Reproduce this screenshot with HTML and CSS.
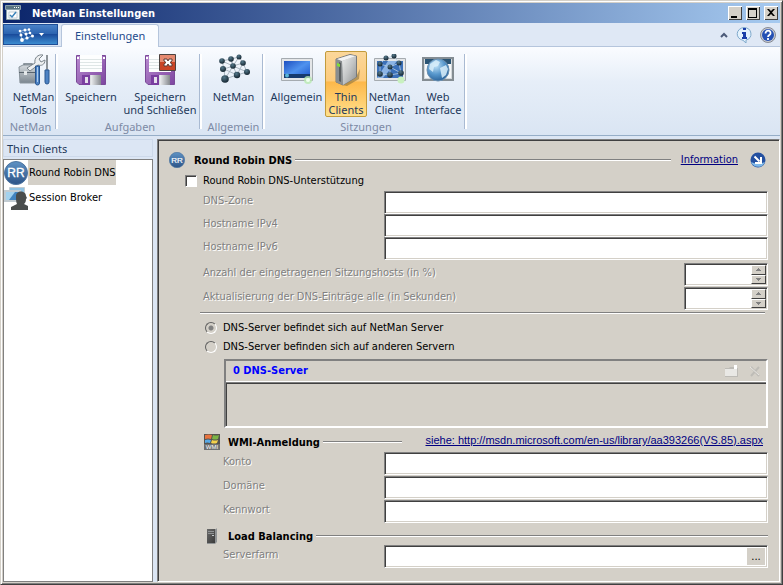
FILE: index.html
```html
<!DOCTYPE html>
<html lang="de">
<head>
<meta charset="utf-8">
<title>NetMan Einstellungen</title>
<link rel="stylesheet" href="styles.css">
</head>
<body>
<svg class="defs" aria-hidden="true">
  <defs>
    <linearGradient id="gBlue" x1="0" y1="0" x2="0" y2="1"><stop offset="0" stop-color="#5f92c4"/><stop offset="1" stop-color="#2c5488"/></linearGradient>
    <linearGradient id="gScreen" x1="0" y1="0" x2="1" y2="1"><stop offset="0" stop-color="#1d4fc0"/><stop offset=".5" stop-color="#4f92ee"/><stop offset="1" stop-color="#1c56cc"/></linearGradient>
    <linearGradient id="gPurple" x1="0" y1="0" x2="1" y2="1"><stop offset="0" stop-color="#b98bd0"/><stop offset="1" stop-color="#7d45a0"/></linearGradient>
    <linearGradient id="gMetal" x1="0" y1="0" x2="1" y2="0"><stop offset="0" stop-color="#8b9094"/><stop offset=".5" stop-color="#e6e8ea"/><stop offset="1" stop-color="#85898d"/></linearGradient>
    <linearGradient id="gCase" x1="0" y1="0" x2="1" y2="1"><stop offset="0" stop-color="#eceded"/><stop offset=".5" stop-color="#c3c5c6"/><stop offset="1" stop-color="#8d9091"/></linearGradient>
    <linearGradient id="gBox" x1="0" y1="0" x2="0" y2="1"><stop offset="0" stop-color="#d5dade"/><stop offset="1" stop-color="#7b868f"/></linearGradient>
    <radialGradient id="gNode" cx=".4" cy=".3" r=".8"><stop offset="0" stop-color="#54788a"/><stop offset="1" stop-color="#0c1a24"/></radialGradient>
    <radialGradient id="gGlobe" cx=".4" cy=".3" r=".8"><stop offset="0" stop-color="#c4e4f8"/><stop offset=".5" stop-color="#5797cc"/><stop offset="1" stop-color="#20568e"/></radialGradient>
    <linearGradient id="gDark" x1="0" y1="0" x2="1" y2="1"><stop offset="0" stop-color="#6b6b6b"/><stop offset="1" stop-color="#3a3a3a"/></linearGradient>
    <symbol id="floppy" viewBox="0 0 32 32">
      <path d="M1.500 1.500h29v29H4l-2.500-2.500z" fill="url(#gPurple)" stroke="#7a4a98"/>
      <path d="M5 1h22v17H5z" fill="#fdfefe"/>
      <path d="M5 5.500h22M5 8.500h22M5 11.500h22M5 14.500h22" stroke="#dfe6e6"/>
      <path d="M7 21h19v10H7z" fill="url(#gMetal)"/>
      <path d="M7 21h8v10H7z" fill="#7a3fa0"/>
      <path d="M10 23h3v6h-3z" fill="#e6e0ec"/>
      <path d="M2 3h2v2H2zM28 3h2v2h-2z" fill="#fff"/>
    </symbol>
    <symbol id="network" viewBox="0 0 32 32">
      <path d="M4 7l9-2 8-2 4 6-10 3-9 3-2-8 11 5-2-7 2 7 6-9M25 9l4 9-10 3-12 4-1-10 13 6-4-9 14 6M25 9l-6 12M7 25l8-13" fill="none" stroke="#9aa8b4" stroke-width=".8"/>
      <g fill="url(#gNode)"><circle cx="4" cy="7" r="2.800"/><circle cx="13" cy="5" r="2.800"/><circle cx="21" cy="3" r="2.500"/><circle cx="25" cy="9" r="2.800"/><circle cx="5" cy="15" r="3"/><circle cx="15" cy="12" r="2.800"/><circle cx="29" cy="18" r="3"/><circle cx="19" cy="21" r="3.200"/><circle cx="7" cy="25" r="3.800"/></g>
    </symbol>
    <symbol id="rr" viewBox="0 0 24 24">
      <circle cx="12" cy="12" r="11.500" fill="url(#gBlue)" stroke="#4c74a0"/>
      <text class="rr-text" x="12" y="16" text-anchor="middle">RR</text>
    </symbol>
  </defs>
</svg>

<div class="window">
  <header class="titlebar">
    <svg class="title-icon" viewBox="0 0 16 16" aria-hidden="true"><path d="M.5.500h15v4h-15z" fill="#5b7582" stroke="#8ba0aa"/><path d="M9 2h1v1H9zM11 2h1v1h-1zM13 2h1v1h-1z" fill="#fff"/><path d="M1.500 4.500h13v10h-13z" fill="#f4f7f8" stroke="#8ba0aa"/><path d="M4 7h8v6H4z" fill="#fff" stroke="#c2cfd6"/><path d="M5 10l2 2 4-5" fill="none" stroke="#3a82b8" stroke-width="1.500"/></svg>
    <h1>NetMan Einstellungen</h1>
    <div class="caption-buttons">
      <button type="button" aria-label="Minimieren"><svg viewBox="0 0 12 10"><path d="M2 8h6v2H2z"/></svg></button>
      <button type="button" aria-label="Maximieren"><svg viewBox="0 0 12 10"><path d="M1 0h9v10H1zM2 2v7h7V2z" fill-rule="evenodd"/></svg></button>
      <button type="button" aria-label="Schließen"><svg viewBox="0 0 12 10"><path d="M2 1h2l2 2 2-2h2L7 4.500 10 8H8L6 6 4 8H2l3-3.500z"/></svg></button>
    </div>
  </header>

  <nav class="tabs">
    <button type="button" class="app-button" aria-label="NetMan">
      <svg class="app-icon" viewBox="0 0 16 14" aria-hidden="true"><path d="M2 3l5-1 4 0 1 3 2 3-5 2-5 2-1-5z M2 3l6 3 4-1M8 6l1 4" fill="none" stroke="#a9c3e2" stroke-width=".7"/><g fill="#fff"><circle cx="2" cy="3" r="1.300"/><circle cx="7" cy="2" r="1.500"/><circle cx="11" cy="1.500" r="1.300"/><circle cx="3" cy="7" r="1.500"/><circle cx="8" cy="6" r="1.500"/><circle cx="12" cy="5" r="1.300"/><circle cx="14.500" cy="8" r="1.500"/><circle cx="9" cy="10" r="1.600"/><circle cx="4" cy="12" r="1.900"/></g></svg>
      <svg class="app-arrow" viewBox="0 0 5 3" aria-hidden="true"><path d="M0 0h5L2.500 3z" fill="#fff"/></svg>
    </button>
    <button type="button" class="tab">Einstellungen</button>
    <div class="tab-tools">
      <button type="button" aria-label="Menüband minimieren"><svg class="chevron" viewBox="0 0 8 6"><path d="M1 5l3-3 3 3" fill="none" stroke="#4b5a78" stroke-width="2"/></svg></button>
      <button type="button" aria-label="Info"><svg class="tool" viewBox="0 0 16 16"><path d="M8 .500a7.500 6.500 0 0 1 2 12.600V16l-3-2.700A7.500 6.500 0 0 1 8 .5z" fill="#e4f2fc" stroke="#7fa9cc"/><path d="M7 1h3v2H7zM6 5h4v5h1v2H6v-2h1V7H6z" fill="#1a3fa8"/></svg></button>
      <button type="button" aria-label="Hilfe"><svg class="tool" viewBox="0 0 16 16"><circle cx="8" cy="8" r="7.500" fill="#c9ccd4" stroke="#868a94"/><circle cx="8" cy="8" r="6" fill="#2450b4"/><path d="M5.500 6.500c0-4 5.500-3.500 5 0C10.200 8 8 8 8 10M8 11v2" fill="none" stroke="#fff" stroke-width="1.800"/></svg></button>
    </div>
  </nav>

  <section class="ribbon">
    <div class="group">
      <div class="group-buttons">
        <button type="button" class="big w-tools">
          <svg viewBox="0 0 32 32" aria-hidden="true"><path d="M6 13v-3h8v3" fill="none" stroke="#69757e" stroke-width="1.500"/><path d="M1 13l4-2h15v18H2z" fill="url(#gBox)" stroke="#8a949c"/><path d="M1 18.500h18" stroke="#59646d"/><path d="M6 17h3v4H6z" fill="#e4e8ea"/><path d="M9 14l8-5c-1-5 3-9 8-8l-4 4 2 3 4-2c0 5-4 6-7 5l-8 6z" fill="#eef0f1" stroke="#7b858c"/><path d="M28 1h2v16h-2z" fill="#8d9499"/><path d="M27 16h4v12q0 2-2 2t-2-2zM17.500 12h4v17q0 2-2 2t-2-2z" fill="#4c82c4" stroke="#285690"/><path d="M19.500 13v15" stroke="#a9cbed"/></svg>
          <span>NetMan Tools</span></button>
      </div>
      <h2>NetMan</h2>
    </div>
    <div class="group">
      <div class="group-buttons">
        <button type="button" class="big w-save"><svg aria-hidden="true"><use href="#floppy"/></svg><span>Speichern</span></button>
        <button type="button" class="big w-close">
          <svg viewBox="0 0 32 32" aria-hidden="true"><use href="#floppy" width="32" height="32"/><path d="M15.500.5h16v16h-16z" fill="#e58a70" stroke="#4c4340"/><path d="M16 8h15v8H16z" fill="#c94426"/><path d="M20 5h3l1 2 1-2h3v2l-2 1.500L28 10v2h-3l-1-2-1 2h-3v-2l2-1.500L20 7z" fill="#fff" stroke="#5d3a34"/></svg>
          <span>Speichern<br>und Schließen</span></button>
      </div>
      <h2>Aufgaben</h2>
    </div>
    <div class="group">
      <div class="group-buttons">
        <button type="button" class="big w-net"><svg aria-hidden="true"><use href="#network"/></svg><span>NetMan</span></button>
      </div>
      <h2>Allgemein</h2>
    </div>
    <div class="group">
      <div class="group-buttons">
        <button type="button" class="big w-general">
          <svg viewBox="0 0 32 32" aria-hidden="true"><path d="M.5 4.500h31v22H.5z" fill="#e4e6e8" stroke="#a5abb0"/><path d="M3 7h26v17H3z" fill="url(#gScreen)"/><path d="M3 20h26v4H3z" fill="#173b6e"/><circle cx="6" cy="21.500" r="2" fill="#58b4d8"/><circle cx="27" cy="26" r="4" fill="#b9eab0" opacity=".8"/><circle cx="27" cy="26" r="2" fill="#effff0"/></svg>
          <span>Allgemein</span></button>
        <button type="button" class="big w-thin active" aria-pressed="true">
          <svg viewBox="0 0 32 32" aria-hidden="true"><path d="M12 31l14-8 4-8-1 10-12 7z" fill="#8b713c" opacity=".6"/><path d="M6 5L20 .500l6.500 1.500v21L13 31l-7-3z" fill="#a8abad" stroke="#77797b"/><path d="M12 7l14-5v21l-13 8z" fill="url(#gCase)"/><path d="M6 5l6 2 1 24-7-3z" fill="#8a8e90"/><path d="M9 8l2 1v19l-2-1z" fill="#5a5e60"/><path d="M7 9l3 1v3l-3-1z" fill="#81de35"/><path d="M7 5L20 1l6 1-14 5z" fill="#f2f3f3"/></svg>
          <span>Thin<br>Clients</span></button>
        <button type="button" class="big w-client">
          <svg viewBox="0 0 32 32" aria-hidden="true"><path d="M.5 4.500h31v22H.5z" fill="#e4e6e8" stroke="#a5abb0"/><path d="M3 7h26v17H3z" fill="#3b70b8"/><path d="M3 24L14 7h9L9 24z" fill="#8cb4e4"/><path d="M6 10l6-6 8-2 5 7-9 4zM6 10v10l10 1 11-2-2-10M16 13v8M16 13l11 6" fill="none" stroke="#b8cfe2" stroke-width=".8"/><g fill="url(#gNode)"><circle cx="12" cy="4" r="2.500"/><circle cx="20" cy="2" r="2.500"/><circle cx="6" cy="10" r="2.500"/><circle cx="16" cy="13" r="2.500"/><circle cx="25" cy="9" r="2.500"/><circle cx="6" cy="20" r="2.800"/><circle cx="16" cy="21" r="2.800"/><circle cx="27" cy="19" r="2.800"/></g><circle cx="27" cy="26" r="3.500" fill="#c9f1c0"/></svg>
          <span>NetMan<br>Client</span></button>
        <button type="button" class="big w-web">
          <svg viewBox="0 0 32 32" aria-hidden="true"><path d="M1 4h30v22H1z" fill="#d4d9dc" stroke="#848d93" stroke-width="2"/><path d="M3 5h26v5H3z" fill="#2a5474"/><path d="M3 10h26v14H3z" fill="#f6f8f9"/><circle cx="16" cy="16" r="11" fill="url(#gGlobe)" stroke="#6c90b0"/><path d="M8 10l6-4 4 2-2 4-4 1-1 5-4-3zM18 14l6-3 2 4-2 6-4 3-1-5z" fill="#d9eefa" opacity=".85"/></svg>
          <span>Web<br>Interface</span></button>
      </div>
      <h2>Sitzungen</h2>
    </div>
  </section>

  <div class="body">
    <aside class="sidebar">
      <h2>Thin Clients</h2>
      <ul>
        <li><a href="#rrdns" class="item selected"><svg aria-hidden="true"><use href="#rr"/></svg><span>Round Robin DNS</span></a></li>
        <li><a href="#broker" class="item"><svg viewBox="0 0 24 24" aria-hidden="true"><path d="M5.500 1.500h15v11h-15z" fill="#8fc3e4" stroke="#c2ccd2"/><path d="M1 5h15v10H1z" fill="#4385c0" stroke="#c2ccd2" stroke-width="2"/><path d="M2 6h9l-6 8H2z" fill="#a3d2ee"/><path d="M12 10c0-6 10-6 10 0l1 2-1 1c0 3-1 4-2 5l4 2v4H7v-3l6-3c-1-2-1-4-1-8z" fill="#4a4d4c"/></svg><span>Session Broker</span></a></li>
      </ul>
    </aside>

    <main class="panel">
      <form>
        <div class="head" id="rrdns">
          <svg class="icon16" aria-hidden="true"><use href="#rr"/></svg>
          <h3>Round Robin DNS</h3><span class="rule"></span>
          <a class="info" href="#info">Information</a>
          <svg class="icon16 go" viewBox="0 0 16 16" aria-hidden="true"><circle cx="8" cy="8" r="7.500" fill="#2450a0"/><path d="M1 10a7.500 7.500 0 0 0 14 0q-7 3-14 0z" fill="#7fb8e8"/><path d="M4.500 4.500l5 5M11 5v6H5" fill="none" stroke="#fff" stroke-width="2"/></svg>
        </div>
        <div class="check-row"><input type="checkbox" id="rr-on"><label for="rr-on">Round Robin DNS-Unterstützung</label></div>

        <div class="fields">
          <label for="zone">DNS-Zone</label><input type="text" id="zone" disabled>
          <label for="v4">Hostname IPv4</label><input type="text" id="v4" disabled>
          <label for="v6">Hostname IPv6</label><input type="text" id="v6" disabled>
        </div>
        <div class="numbers">
          <label for="hosts">Anzahl der eingetragenen Sitzungshosts (in %)</label>
          <div class="spin"><input type="text" id="hosts" disabled><span class="steps"><button type="button" disabled aria-label="Mehr"><svg viewBox="0 0 5 3"><path d="M2 0h1v1h1v1h1v1H0V2h1V1h1z"/></svg></button><button type="button" disabled aria-label="Weniger"><svg viewBox="0 0 5 3"><path d="M0 0h5v1H4v1H3v1H2V2H1V1H0z"/></svg></button></span></div>
          <label for="refresh">Aktualisierung der DNS-Einträge alle (in Sekunden)</label>
          <div class="spin"><input type="text" id="refresh" disabled><span class="steps"><button type="button" disabled aria-label="Mehr"><svg viewBox="0 0 5 3"><path d="M2 0h1v1h1v1h1v1H0V2h1V1h1z"/></svg></button><button type="button" disabled aria-label="Weniger"><svg viewBox="0 0 5 3"><path d="M0 0h5v1H4v1H3v1H2V2H1V1H0z"/></svg></button></span></div>
        </div>
        <hr>
        <div class="radio-row"><input type="radio" name="loc" id="loc1" checked><label for="loc1">DNS-Server befindet sich auf NetMan Server</label></div>
        <div class="radio-row"><input type="radio" name="loc" id="loc2"><label for="loc2">DNS-Server befinden sich auf anderen Servern</label></div>

        <section class="servers">
          <header>
            <h4>0 DNS-Server</h4>
            <button type="button" disabled aria-label="Neu"><svg viewBox="0 0 13 12"><path d="M0 3h4l1-1h4v1h4v9H0z" fill="#bdbbb6"/><path d="M0 4h12v7H0z" fill="#e9e8e5"/><path d="M9 0h3v4H9z" fill="#fff"/></svg></button>
            <button type="button" disabled aria-label="Löschen"><svg viewBox="0 0 13 12"><path d="M2 2l8 9M10 2l-8 9" stroke="#bebcb7" stroke-width="2"/><path d="M1 2l9 8" stroke="#e9e7e3"/></svg></button>
          </header>
          <div class="server-list"></div>
        </section>

        <div class="head sub wmi">
          <svg class="icon16" viewBox="0 0 16 16" aria-hidden="true"><path d="M0 0h16v16H0z" fill="#56534f"/><path d="M1 1q4-1 7 0L7 5Q4 4 1 5z" fill="#e8743f"/><path d="M9 1q3 1 6 0l-1 4q-3 1-6 0z" fill="#7cb545"/><path d="M1 6q3-1 6 0L6 9Q3 8 1 9z" fill="#58a9e6"/><path d="M8 6q3 1 6 0l-1 3q-3 1-6 0z" fill="#f4d24c"/><path d="M0 10h16v6H0z" fill="#6d6f71"/><text class="wmi-text" x="8" y="15" text-anchor="middle">WMI</text></svg>
          <h3>WMI-Anmeldung</h3><span class="rule"></span>
          <a href="http://msdn.microsoft.com/en-us/library/aa393266(VS.85).aspx">siehe: http://msdn.microsoft.com/en-us/library/aa393266(VS.85).aspx</a>
        </div>
        <div class="fields login">
          <label for="account">Konto</label><input type="text" id="account" disabled>
          <label for="domain">Domäne</label><input type="text" id="domain" disabled>
          <label for="pass">Kennwort</label><input type="password" id="pass" disabled>
        </div>
        <div class="head sub load">
          <svg class="icon16" viewBox="0 0 16 16" aria-hidden="true"><path d="M3 1h9l1-1v14l-2 2H3z" fill="#909395"/><path d="M3 1h8v14H3z" fill="url(#gDark)"/><path d="M4 3.500h6M4 5.500h6" stroke="#8f9294"/><path d="M8 7h2v1H8z" fill="#c6cacc"/></svg>
          <h3>Load Balancing</h3><span class="rule"></span>
        </div>
        <div class="fields login">
          <label for="farm">Serverfarm</label>
          <div class="browse"><input type="text" id="farm" disabled><button type="button">...</button></div>
        </div>
      </form>
    </main>
  </div>
</div>
</body>
</html>
```
FILE: styles.css
```css
* { box-sizing: border-box; }
html, body { height: 100%; }
body {
  margin: 0;
  font: 11px/14px "DejaVu Sans Condensed", "DejaVu Sans", sans-serif;
  color: #000;
  background: #d4d0c8;
}
h1, h2, h3, h4, ul, hr { margin: 0; padding: 0; }
h1, h3, h4 { font-size: 11px; font-weight: bold; }
ul { list-style: none; }
button, input { margin: 0; padding: 0; border: 0; font: inherit; border-radius: 0; }
svg { display: block; }
.defs { position: absolute; width: 0; height: 0; }

.window {
  min-height: 100vh;
  display: flex;
  flex-direction: column;
  padding: 2px;
  border: 1px solid #d4d0c8;
  border-right-color: #404040;
  border-bottom-color: #404040;
  box-shadow: inset 1px 1px #fff, inset -1px -1px #808080;
  background: #d4d0c8;
}

.titlebar {
  display: flex;
  align-items: center;
  height: 20px;
  padding: 0 2px;
  color: #fff;
  background: linear-gradient(to right, #0a246a, #a6caf0);
}
.title-icon { width: 16px; height: 16px; }
.titlebar h1 { flex: 1; margin-left: 11px; padding-top: 1px; }
.caption-buttons { display: flex; gap: 4px; }
.caption-buttons button {
  width: 14px;
  height: 14px;
  padding: 1px;
  background: #d4d0c8;
  box-shadow: inset 1px 1px #fff, inset -1px -1px #404040;
}
.caption-buttons svg { width: 12px; height: 10px; }

.tabs {
  display: flex;
  align-items: stretch;
  height: 24px;
  background: #dfe8f5;
  border-bottom: 1px solid #b5c5dc;
}
.app-button {
  display: flex;
  align-items: center;
  justify-content: center;
  gap: 5px;
  width: 55px;
  margin: 1px 0;
  border: 1px solid #1f4e96;
  background: linear-gradient(#4a82c8, #2c64b0 45%, #1a4c9c 50%, #3c8cd0);
}
.app-icon { width: 16px; height: 14px; }
.app-arrow { width: 5px; height: 3px; }
.tab {
  position: relative;
  margin: 1px 0 -1px 3px;
  padding: 0 13px;
  border: 1px solid #b5c5dc;
  border-bottom: 0;
  border-radius: 3px 3px 0 0;
  background: #fafcff;
  color: #1e4a8c;
  font: 11px/22px "Noto Sans", sans-serif;
}
.tab-tools { display: flex; flex: 1; justify-content: flex-end; align-items: center; padding-right: 4px; }
.tab-tools button { background: none; margin-left: 8px; }
.chevron { width: 8px; height: 6px; }
.tool { width: 16px; height: 16px; }

.ribbon {
  display: flex;
  height: 89px;
  padding-top: 4px;
  background: linear-gradient(#fafcff, #e6eef8 40%, #dae5f3);
  border-bottom: 1px solid #96aec8;
}
.group { display: flex; flex-direction: column; padding: 0 3px; position: relative; }
.group::after {
  content: "";
  position: absolute;
  right: 0; top: 3px; bottom: 6px;
  width: 2px;
  border-left: 1px solid #a9bad2;
  background: #fff;
}
.group-buttons { display: flex; flex: 1; }
.group h2 {
  color: #7d8aa5;
  font: 11px/16px "Noto Sans", sans-serif;
  text-align: center;
}
.big {
  display: flex;
  flex-direction: column;
  align-items: center;
  height: 66px;
  padding-top: 3px;
  background: none;
  color: #1e395b;
  font: 11px/13px "Noto Sans", sans-serif;
  white-space: nowrap;
}
.big svg { width: 32px; height: 32px; margin-bottom: 4px; }
.big.active {
  border: 1px solid #c29b3c;
  border-radius: 2px;
  padding-top: 2px;
  background: linear-gradient(#fbd79a, #fdcb7c 45%, #fdb84a 47%, #ffe08c);
}
.w-tools { width: 49px; white-space: normal; padding-left: 6px; }
.w-save { width: 60px; }
.w-close { width: 78px; }
.w-net { width: 57px; }
.w-general { width: 57px; }
.w-thin { width: 42px; }
.w-client { width: 45px; }
.w-web { width: 52px; }

.body {
  flex: 1;
  display: flex;
  gap: 4px;
  padding-top: 3px;
  background: #dce6f4;
}
.sidebar { width: 150px; display: flex; flex-direction: column; }
.sidebar h2 {
  height: 18px;
  margin-bottom: 2px;
  padding-left: 3px;
  border: 1px solid #cdd9ea;
  color: #1e395b;
  font: 11px/18px "Noto Sans", sans-serif;
}
.sidebar ul { flex: 1; background: #fff; border: 1px solid #808080; }
.item { display: flex; align-items: center; height: 25px; color: #000; text-decoration: none; }
.item svg { width: 24px; height: 24px; }
.item span { padding: 1px 0 0 1px; line-height: 24px; }
.item.selected span { background: #d4d0c8; }
.rr-text { font: 12px "Liberation Sans", sans-serif; fill: #fff; stroke: #fff; stroke-width: .3px; }
.wmi-text { font: 6px "Liberation Sans", sans-serif; fill: #fff; }

.panel {
  flex: 1;
  min-width: 0;
  padding: 11px;
  background: #d4d0c8;
  border: 1px solid;
  border-color: #808080 #fff #fff #808080;
  box-shadow: inset 1px 1px #404040;
}
.head { display: flex; align-items: center; height: 18px; }
.head h3 { margin-left: 9px; padding-top: 1px; }
.head a { color: #000080; }
.rule { flex: 1; height: 2px; margin-left: 3px; background: #808080; border-bottom: 1px solid #fff; }
.icon16 { width: 16px; height: 16px; }
.info { margin-left: 10px; }
.go { margin: 0 2px 0 12px; }

.check-row { display: flex; align-items: center; height: 21px; margin-top: 1px; padding-left: 16px; }
.check-row label { margin-left: 6px; padding-top: 1px; }
input[type="checkbox"] {
  appearance: none;
  width: 12px;
  height: 12px;
  background: #fff;
  border: 1px solid;
  border-color: #808080 #fff #fff #808080;
  box-shadow: inset 1px 1px #404040;
}

.fields, .numbers { display: grid; grid-auto-rows: 23px; align-items: start; padding-left: 34px; color: #808080; }
.fields { grid-template-columns: 181px 1fr; }
.fields label, .numbers label { line-height: 20px; text-shadow: 1px 1px #fff; }
.fields > input, .browse, .spin {
  width: 100%;
  height: 23px;
  background: #fff;
  border: 1px solid;
  border-color: #808080 #fff #fff #808080;
  box-shadow: inset 1px 1px #404040, inset -1px -1px #d4d0c8;
}
.browse, .spin { display: flex; padding: 1px; }
.browse input, .spin input { flex: 1; min-width: 0; background: none; }
.browse button { width: 18px; margin: 1px; background: #d4d0c8; }
.numbers { grid-template-columns: 1fr 84px; row-gap: 1px; margin-top: 3px; }
.steps { display: flex; flex-direction: column; width: 15px; }
.steps button {
  flex: 1;
  display: flex;
  align-items: center;
  justify-content: center;
  background: #d4d0c8;
  border: 1px solid;
  border-color: #fff #404040 #404040 #fff;
}
.steps svg { width: 5px; height: 3px; fill: #808080; }

hr { border: 0; height: 2px; margin: 2px 3px 4px 31px; background: #808080; border-bottom: 1px solid #fff; }

.radio-row { display: flex; align-items: center; height: 19px; padding-left: 36px; }
.radio-row label { margin-left: 6px; }
input[type="radio"] {
  appearance: none;
  width: 12px;
  height: 12px;
  border: 1px solid;
  border-color: #606060 #fff #fff #606060;
  border-radius: 50%;
}
input[type="radio"]:checked { background: radial-gradient(circle, #808080 2px, transparent 3px); }

.servers {
  margin: 3px 0 4px 55px;
  border: 2px solid;
  border-color: #808080 #fff #fff #808080;
}
.servers header { display: flex; align-items: center; height: 21px; padding-right: 4px; border-bottom: 1px solid #fff; }
.servers h4 { flex: 1; padding-left: 7px; color: #00f; }
.servers header button { background: none; margin-left: 11px; }
.servers header svg { width: 13px; height: 12px; }
.server-list { height: 44px; border-top: 1px solid #808080; box-shadow: inset 1px 1px #404040; }

.head.sub { padding-left: 35px; }
.head.sub h3 { margin-left: 8px; }
.wmi { height: 20px; }
.wmi a { margin: 0 5px 0 24px; padding-bottom: 4px; font: 11px/14px "Liberation Sans", sans-serif; }
.load { margin-top: 4px; }
.login { grid-template-columns: 161px 1fr; padding-left: 54px; row-gap: 1px; }
```
